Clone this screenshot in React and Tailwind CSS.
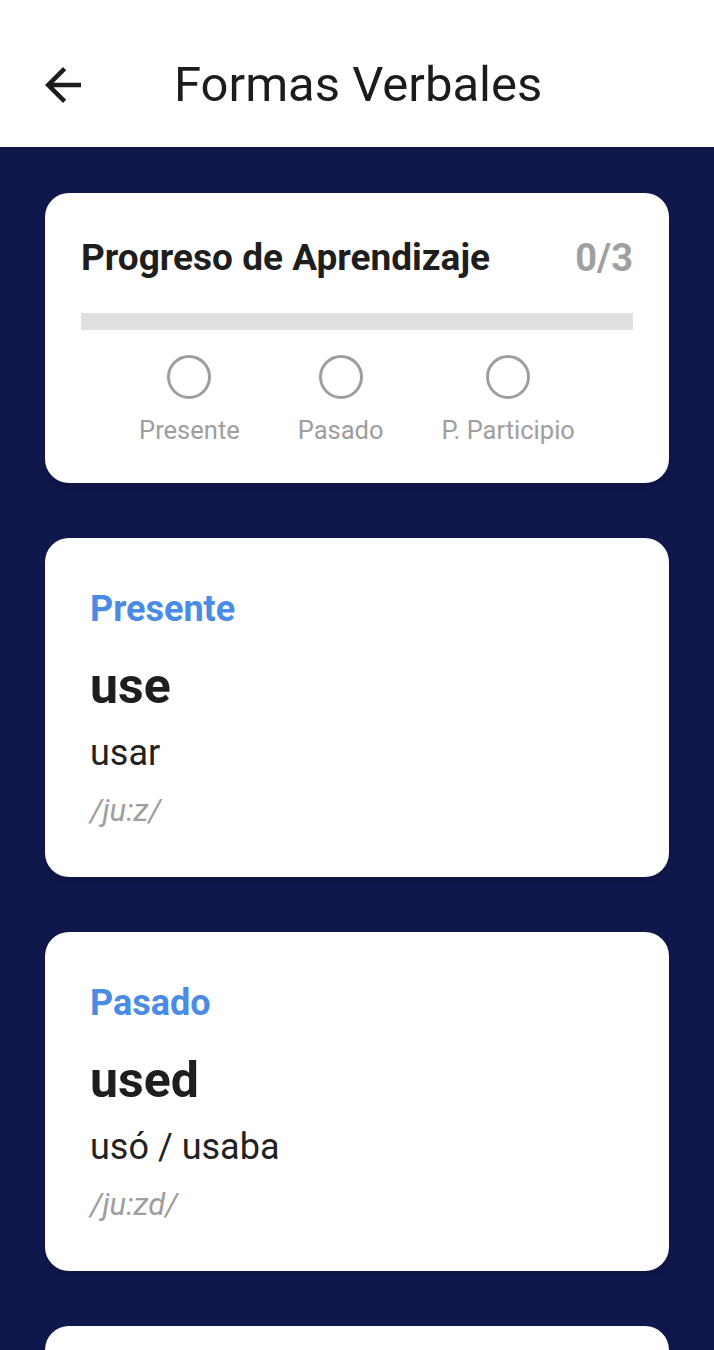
import React from "react";

const steps = ["Presente", "Pasado", "P. Participio"];

const forms = [
  { label: "Presente", word: "use", meaning: "usar", phonetic: "/ju:z/" },
  { label: "Pasado", word: "used", meaning: "usó / usaba", phonetic: "/ju:zd/" },
  { label: "P. Participio", word: "used", meaning: "usado", phonetic: "/ju:zd/" },
];

const ArrowBack = () => (
  <svg viewBox="0 0 24 24" className="w-[54px] h-[54px]" fill="#1c1c1c">
    <path d="M20 11H7.83l5.59-5.59L12 4l-8 8 8 8 1.41-1.41L7.83 13H20v-2z" />
  </svg>
);

const FormCard = ({ item }) => (
  <div className="bg-white rounded-[24px] shadow-md px-[45px] pt-[50px] pb-[48px]">
    <div className="text-[36px] leading-[42px] font-bold text-[#4a8be6]">
      {item.label}
    </div>
    <div className="mt-[27px] text-[50px] leading-[58px] font-bold text-[#1e1e1e]">
      {item.word}
    </div>
    <div className="mt-[17px] text-[36px] leading-[42px] text-[#222]">
      {item.meaning}
    </div>
    <div className="mt-[19px] text-[31px] leading-[36px] italic text-[#9e9e9e]">
      {item.phonetic}
    </div>
  </div>
);

export default function App() {
  return (
    <div
      className="min-h-[1350px] bg-[#10174a]"
      style={{ fontFamily: "Roboto, 'Liberation Sans', sans-serif" }}
    >
      {/* App bar */}
      <div className="bg-white h-[147px] flex items-center pl-[36px] pt-[22px]">
        <ArrowBack />
        <h1 className="ml-[84px] text-[49px] leading-[56px] text-[#1c1c1c] font-normal">
          Formas Verbales
        </h1>
      </div>

      <div className="px-[45px] pt-[46px] flex flex-col gap-[55px]">
        {/* Progress card */}
        <div className="bg-white rounded-[24px] shadow-md px-[36px] pt-[44px] pb-[38px]">
          <div className="flex items-center justify-between">
            <span className="text-[37px] leading-[42px] font-bold text-[#1e1e1e]">
              Progreso de Aprendizaje
            </span>
            <span className="text-[38px] leading-[42px] font-bold text-[#a0a0a0]">
              0/3
            </span>
          </div>
          <div className="mt-[34px] h-[17px] bg-[#e0e0e0]" />
          <div className="mt-[25px] flex justify-center gap-[58px]">
            {steps.map((s) => (
              <div key={s} className="flex flex-col items-center">
                <div className="w-[44px] h-[44px] rounded-full border-[3px] border-[#9e9e9e]" />
                <span className="mt-[16px] text-[25.5px] leading-[30px] text-[#9e9e9e]">
                  {s}
                </span>
              </div>
            ))}
          </div>
        </div>

        {forms.map((f, i) => (
          <FormCard key={i} item={f} />
        ))}
      </div>
    </div>
  );
}
